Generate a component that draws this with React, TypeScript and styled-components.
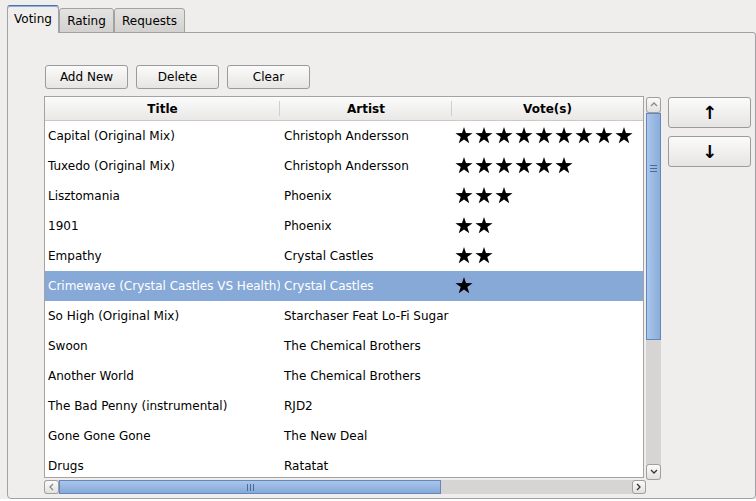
import React from "react";
import styled, { createGlobalStyle, css } from "styled-components";

const Global = createGlobalStyle`
  html, body { margin: 0; padding: 0; background: #ffffff; }
  body { font-family: "DejaVu Sans", "Liberation Sans", sans-serif; font-size: 12px; color: #000; }
  * { box-sizing: border-box; }
`;

const Window = styled.div`
  width: 756px;
  height: 499px;
  padding: 5px 0 0 7px;
  background: #efeeec;
  display: flex;
  flex-direction: column;
`;

const TabBar = styled.div`
  display: flex;
  align-items: flex-end;
  height: 28px;
  margin-bottom: -1px;
  position: relative;
  z-index: 1;
`;

const Tab = styled.div<{ $active?: boolean; $w: number }>`
  width: ${(p) => p.$w}px;
  display: flex;
  align-items: center;
  justify-content: center;
  border: 1px solid #a2a2a2;
  border-radius: 3px 3px 0 0;
  ${(p) =>
    p.$active
      ? css`
          height: 28px;
          background: #efeeec;
          border-bottom: none;
          border-top-color: #4e72aa;
          box-shadow: inset 0 1px 0 #8db0df;
          padding-bottom: 2px;
        `
      : css`
          height: 25px;
          background: linear-gradient(#e4e3e1, #d2d1cf);
          padding-top: 1px;
        `}
`;

const Pane = styled.div`
  height: 467px;
  width: 749px;
  border: 1px solid #a2a2a2;
  border-radius: 0 3px 4px 4px;
  background: #efeeec;
  padding: 32px 0 0 36px;
  display: flex;
  flex-direction: column;
`;

const ButtonRow = styled.div`
  display: flex;
  gap: 8px;
  margin-left: 1px;
  margin-bottom: 7px;
`;

const PushButton = styled.button<{ $w?: number; $h?: number }>`
  width: ${(p) => p.$w ?? 83}px;
  height: ${(p) => p.$h ?? 24}px;
  border: 1px solid #9b9b9b;
  border-radius: 3px;
  background: linear-gradient(#fbfbfb, #e6e5e3);
  font-family: "DejaVu Sans", sans-serif;
  font-size: 12px;
  color: #000;
  padding: 0;
  display: flex;
  align-items: center;
  justify-content: center;
`;

const Body = styled.div`
  display: flex;
  gap: 7px;
  align-items: flex-start;
`;

const TableArea = styled.div`
  display: grid;
  grid-template-columns: 600px 2px 15px;
  grid-template-rows: 382px 2px 14px;
`;

const Frame = styled.div`
  grid-row: 1;
  grid-column: 1;
  border: 1px solid #a3a3a3;
  background: #fff;
  overflow: hidden;
`;

const cols = "235px 172px 1fr";

const Header = styled.div`
  display: grid;
  grid-template-columns: ${cols};
  height: 24px;
  background: linear-gradient(#fbfbfb, #e9e8e6);
  border-bottom: 1px solid #c9c9c9;
`;

const HeadCell = styled.div<{ $sep?: boolean }>`
  display: flex;
  align-items: center;
  justify-content: center;
  font-weight: bold;
  position: relative;
  &::after {
    content: "";
    display: ${(p) => (p.$sep ? "block" : "none")};
    position: absolute;
    right: 0;
    top: 4px;
    bottom: 4px;
    width: 1px;
    background: #cfcfcf;
  }
`;

const Row = styled.div<{ $sel?: boolean }>`
  display: grid;
  grid-template-columns: ${cols};
  height: 30px;
  align-items: center;
  background: ${(p) => (p.$sel ? "#87a9d7" : "#fff")};
  color: ${(p) => (p.$sel ? "#fff" : "#000")};
`;

const Cell = styled.div<{ $pad: number }>`
  padding-left: ${(p) => p.$pad}px;
  white-space: nowrap;
  overflow: hidden;
  height: 30px;
  display: flex;
  align-items: center;
`;

const Stars = styled.div`
  display: flex;
  gap: 2px;
  padding-left: 3px;
  margin-top: -2px;
`;

const VScroll = styled.div`
  grid-row: 1 / 3;
  grid-column: 3;
  margin-top: 1px;
  display: flex;
  flex-direction: column;
  background: #d6d5d3;
  border-radius: 2px;
`;

const HScroll = styled.div`
  grid-row: 3;
  grid-column: 1 / 3;
  display: flex;
  background: #d6d5d3;
  border-radius: 2px;
`;

const ScrollBtn = styled.div<{ $w: number; $h: number }>`
  width: ${(p) => p.$w}px;
  height: ${(p) => p.$h}px;
  flex: none;
  border: 1px solid #9f9f9f;
  border-radius: 3px;
  background: linear-gradient(#fbfbfb, #e2e1df);
  display: flex;
  align-items: center;
  justify-content: center;
`;

const Thumb = styled.div<{ $vertical?: boolean; $len: number }>`
  flex: none;
  ${(p) =>
    p.$vertical
      ? css`
          height: ${p.$len}px;
          width: 15px;
          background: linear-gradient(to right, #a9c6eb, #8badda);
        `
      : css`
          width: ${p.$len}px;
          height: 14px;
          background: linear-gradient(#a9c6eb, #86a8d8);
        `}
  border: 1px solid #6586bb;
  display: flex;
  align-items: center;
  justify-content: center;
`;

const Grip = styled.div<{ $vertical?: boolean }>`
  display: flex;
  flex-direction: ${(p) => (p.$vertical ? "column" : "row")};
  gap: 2px;
  ${(p) => (p.$vertical ? "margin-bottom: 117px;" : "margin-left: 0;")}
  span {
    display: block;
    background: #4c6a98;
    width: ${(p) => (p.$vertical ? "7px" : "1px")};
    height: ${(p) => (p.$vertical ? "1px" : "7px")};
  }
`;

const Track = styled.div`
  flex: 1;
`;

const SideButtons = styled.div`
  display: flex;
  flex-direction: column;
  gap: 8px;
  margin-top: 1px;
`;

const Arrow = styled.span`
  font-family: "DejaVu Sans", sans-serif;
  font-weight: bold;
  font-size: 18px;
  line-height: 1;
`;

const Star = () => (
  <svg width="18" height="17" viewBox="0 0 18 18">
    <polygon
      points="9,0 11.1,6.4 18.03,6.56 12.5,10.6 14.58,17.19 9,13.2 3.42,17.19 5.5,10.6 -0.03,6.56 6.9,6.4"
      fill="#000"
    />
  </svg>
);

const Chevron = ({ dir }: { dir: "up" | "down" | "left" | "right" }) => {
  const pts =
    dir === "up"
      ? "1,5 4,2 7,5"
      : dir === "down"
      ? "1,2 4,5 7,2"
      : dir === "left"
      ? "5,1 2,4 5,7"
      : "2,1 5,4 2,7";
  return (
    <svg width="8" height="8" viewBox="0 0 8 8">
      <polyline points={pts} fill="none" stroke={dir === "left" || dir === "up" ? "#8a8a8a" : "#333"} strokeWidth="1.3" />
    </svg>
  );
};

const rows: [string, string, number][] = [
  ["Capital (Original Mix)", "Christoph Andersson", 9],
  ["Tuxedo (Original Mix)", "Christoph Andersson", 6],
  ["Lisztomania", "Phoenix", 3],
  ["1901", "Phoenix", 2],
  ["Empathy", "Crystal Castles", 2],
  ["Crimewave (Crystal Castles VS Health)", "Crystal Castles", 1],
  ["So High (Original Mix)", "Starchaser Feat Lo-Fi Sugar", 0],
  ["Swoon", "The Chemical Brothers", 0],
  ["Another World", "The Chemical Brothers", 0],
  ["The Bad Penny (instrumental)", "RJD2", 0],
  ["Gone Gone Gone", "The New Deal", 0],
  ["Drugs", "Ratatat", 0],
];

export default function App() {
  return (
    <>
      <Global />
      <Window>
        <TabBar>
          <Tab $active $w={52}>Voting</Tab>
          <Tab $w={55}>Rating</Tab>
          <Tab $w={71}>Requests</Tab>
        </TabBar>
        <Pane>
          <ButtonRow>
            <PushButton>Add New</PushButton>
            <PushButton>Delete</PushButton>
            <PushButton>Clear</PushButton>
          </ButtonRow>
          <Body>
            <TableArea>
              <Frame>
                <Header>
                  <HeadCell $sep>Title</HeadCell>
                  <HeadCell $sep>Artist</HeadCell>
                  <HeadCell>Vote(s)</HeadCell>
                </Header>
                {rows.map(([t, a, v], i) => (
                  <Row key={i} $sel={i === 5}>
                    <Cell $pad={3}>{t}</Cell>
                    <Cell $pad={4}>{a}</Cell>
                    <Stars>
                      {Array.from({ length: v }).map((_, k) => (
                        <Star key={k} />
                      ))}
                    </Stars>
                  </Row>
                ))}
              </Frame>
              <VScroll>
                <ScrollBtn $w={15} $h={16}>
                  <Chevron dir="up" />
                </ScrollBtn>
                <Thumb $vertical $len={227}>
                  <Grip $vertical>
                    <span />
                    <span />
                    <span />
                  </Grip>
                </Thumb>
                <Track />
                <ScrollBtn $w={15} $h={16}>
                  <Chevron dir="down" />
                </ScrollBtn>
              </VScroll>
              <HScroll>
                <ScrollBtn $w={15} $h={14}>
                  <Chevron dir="left" />
                </ScrollBtn>
                <Thumb $len={382}>
                  <Grip>
                    <span />
                    <span />
                    <span />
                  </Grip>
                </Thumb>
                <Track />
                <ScrollBtn $w={14} $h={14}>
                  <Chevron dir="right" />
                </ScrollBtn>
              </HScroll>
            </TableArea>
            <SideButtons>
              <PushButton $w={83} $h={31}>
                <Arrow>↑</Arrow>
              </PushButton>
              <PushButton $w={83} $h={31}>
                <Arrow>↓</Arrow>
              </PushButton>
            </SideButtons>
          </Body>
        </Pane>
      </Window>
    </>
  );
}
